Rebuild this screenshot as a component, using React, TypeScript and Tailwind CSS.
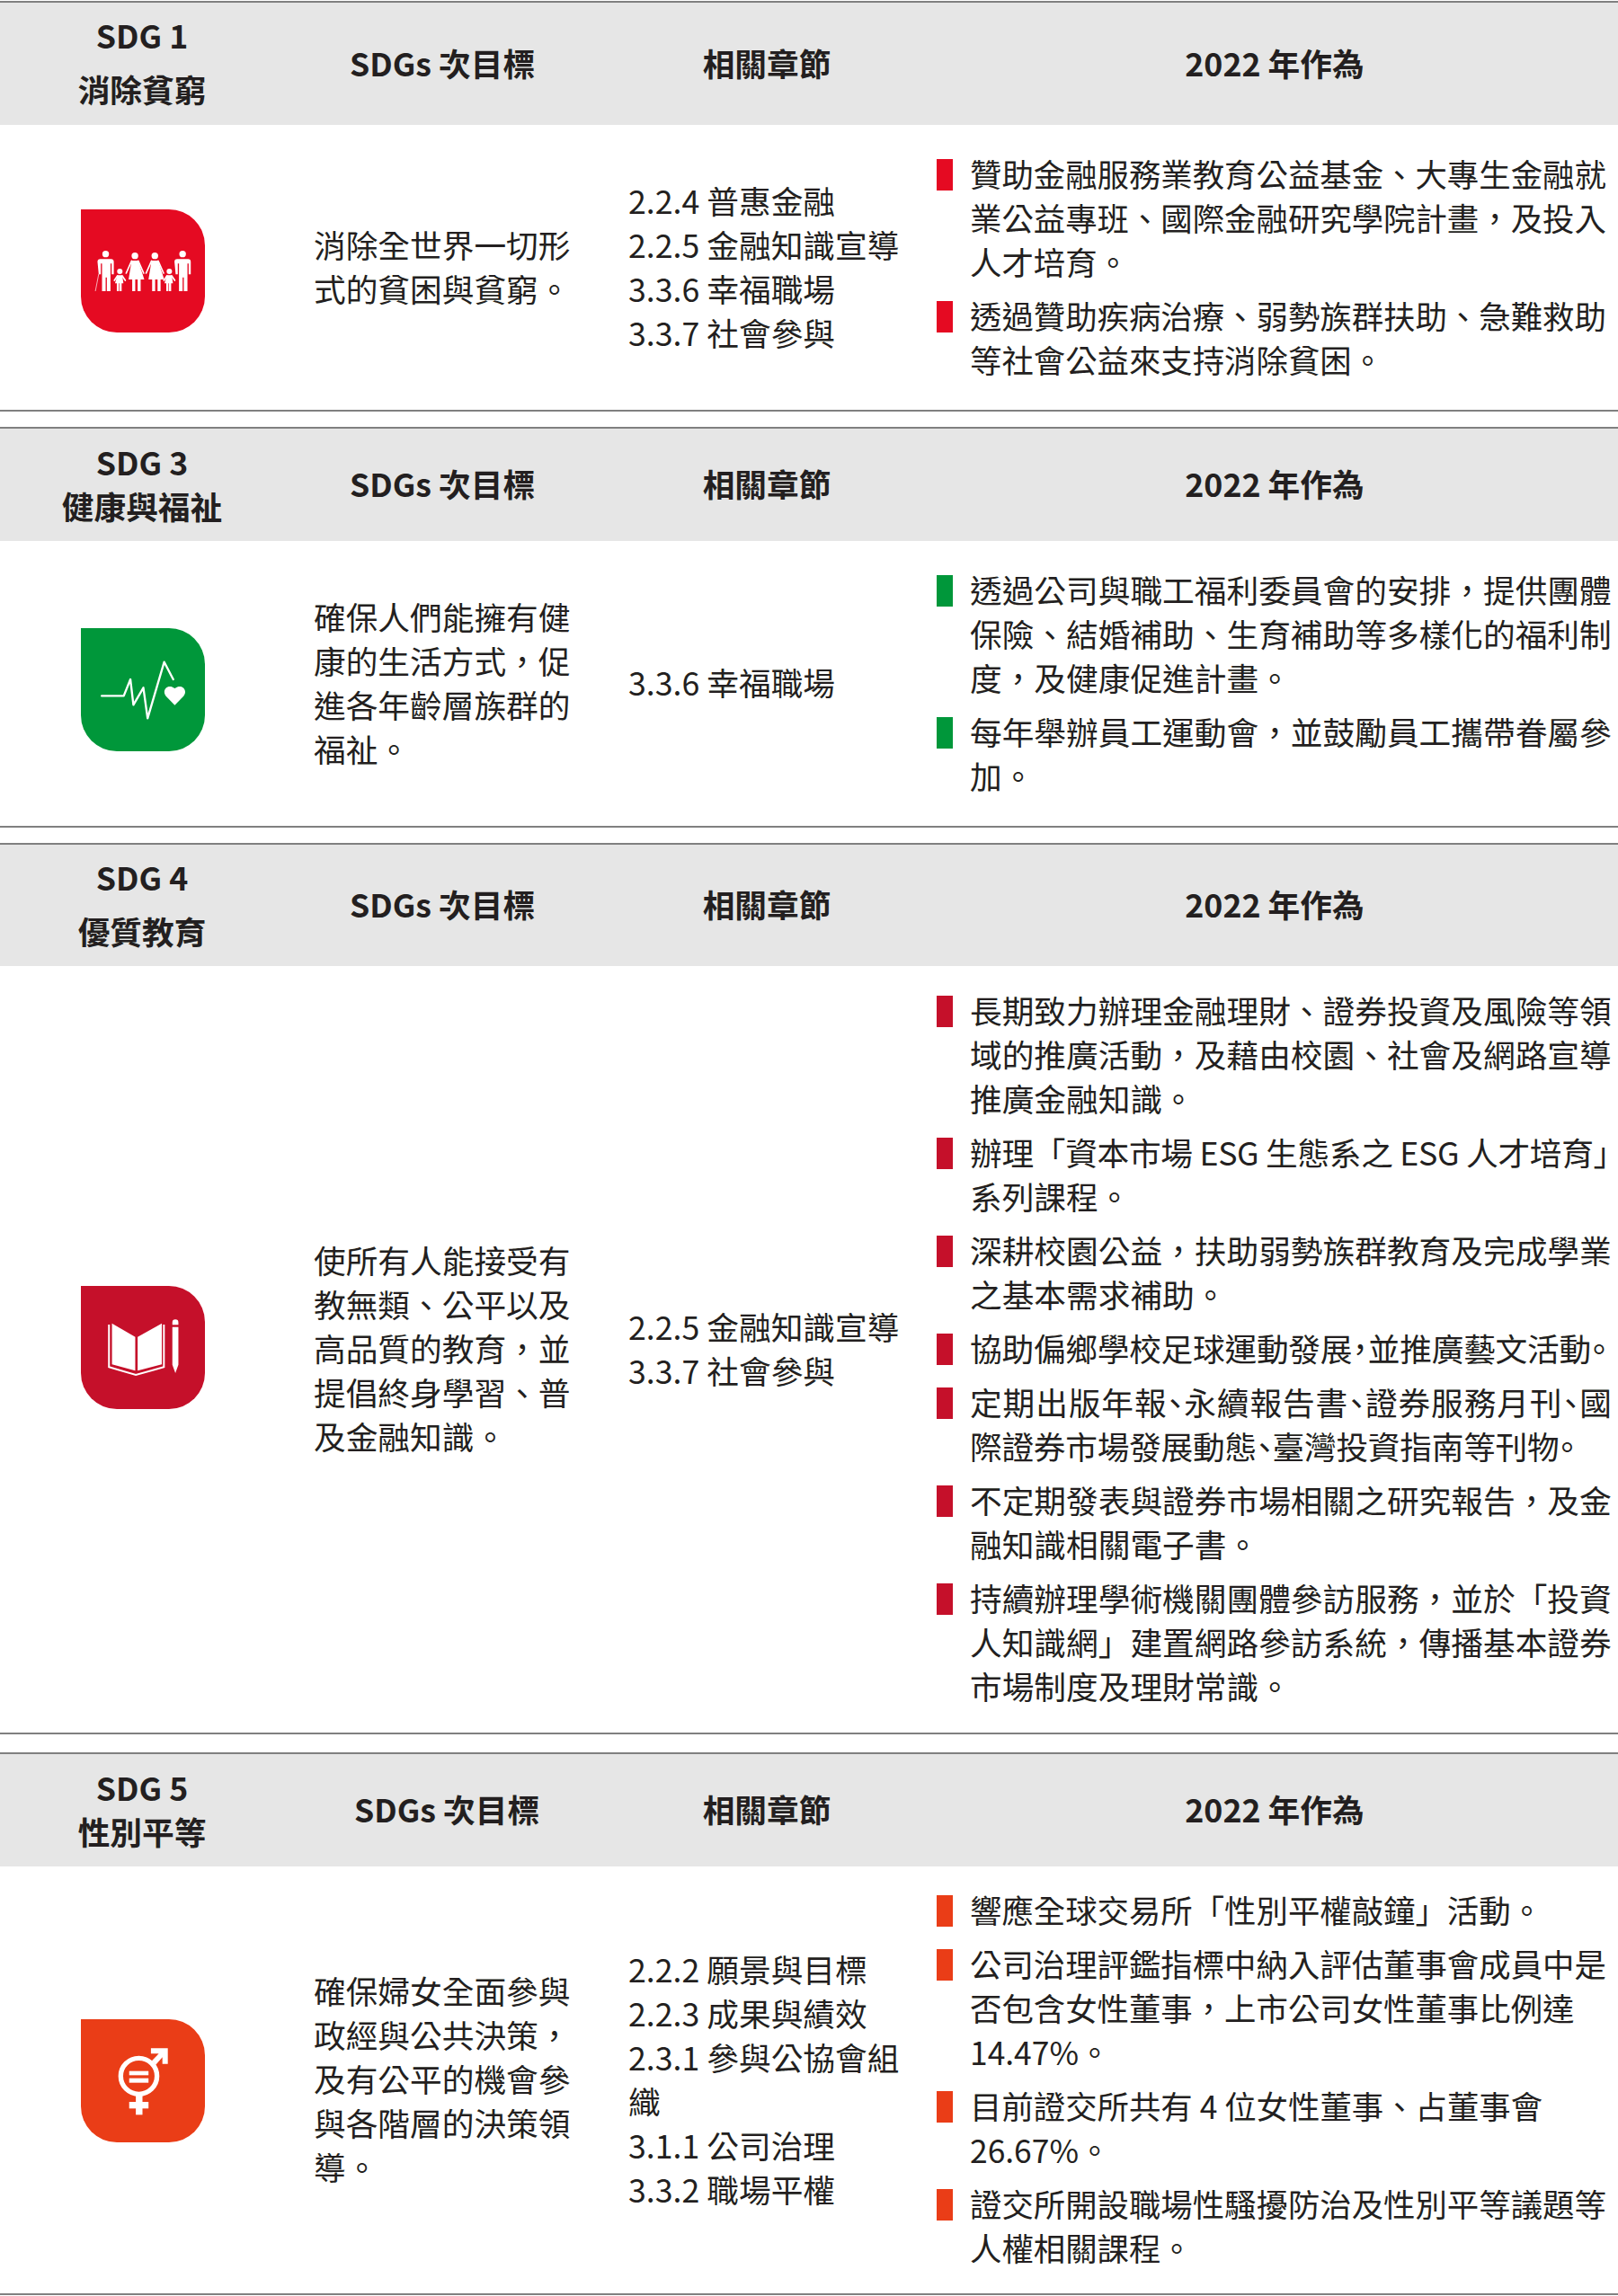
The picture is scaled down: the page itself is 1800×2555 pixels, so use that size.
import React from 'react';

interface Goal {
  sdg: string;
  name: string;
  headH: string;
  leading: string;
  bodyH: string;
  gap: string;
  icon: React.ReactNode;
  iconBg: string;
  iconShift: string;
  bullet: string;
  actionSize: string;
  subHeadShift?: string;
  target: string[];
  chapters: string[];
  actions: string[][];
}

// lines the reference fits to the column by hand: half-width punctuation and/or tracking
const FITTED: Record<string, string> = {
  '協助偏鄉學校足球運動發展\uFF0C並推廣藝文活動。': "[font-feature-settings:'halt'] tracking-[-0.25px]",
  '定期出版年報、永續報告書、證券服務月刊、國': "[font-feature-settings:'halt'] tracking-[0.9px]",
  '際證券市場發展動態、臺灣投資指南等刊物。': "[font-feature-settings:'halt'] tracking-[-0.25px]",
  '辦理「資本市場 ESG 生態系之 ESG 人才培育」': 'tracking-[-0.3px]',
};

function Man({ cx }: { cx: number }) {
  return (
    <g fill="#fff">
      <circle cx={cx} cy={218} r={11} />
      <path d={`M${cx - 27} 244q0-9 9-9h36q9 0 9 9v42h-7v-36h-4v92h-12v-46h-4v46h-12v-92h-4v36h-7z`} />
    </g>
  );
}

function Woman({ cx }: { cx: number }) {
  return (
    <g fill="#fff">
      <circle cx={cx} cy={224} r={11} />
      <path d={`M${cx - 11} 240h22l20 63h-12v39h-10v-39h-8v39h-10v-39h-12z`} />
      <path d={`M${cx - 11} 241L${cx - 29} 282M${cx + 11} 241L${cx + 29} 282`} stroke="#fff" strokeWidth={5} strokeLinecap="round" />
    </g>
  );
}

function Kid({ cx }: { cx: number }) {
  return (
    <g fill="#fff">
      <circle cx={cx} cy={276} r={9} />
      <path d={`M${cx - 8} 289h16l4 27h-6v26h-7v-26h-2v26h-7v-26h-6z`} />
      <path d={`M${cx - 8} 291L${cx - 18} 306M${cx + 8} 291L${cx + 18} 306`} stroke="#fff" strokeWidth={5} strokeLinecap="round" />
    </g>
  );
}

// icon art is traced in crop coordinates, so the group shifts it back into the box
function IconFamily() {
  return (
    <g transform="translate(-90 -69)">
      <Man cx={172} />
      <path d="M149 285L138 342" stroke="#fff" strokeWidth={2} />
      <Kid cx={219} />
      <Woman cx={269} />
      <Woman cx={335} />
      <Kid cx={383} />
      <Man cx={427} />
    </g>
  );
}

function IconHealth() {
  return (
    <g transform="translate(-90 -57)">
      <polyline points="159,283 232,283 254,228 264,313 297,256 311,358 366,170 396,228" fill="none" stroke="#fff" strokeWidth={7} strokeLinecap="round" strokeLinejoin="round" />
      <path d="M401 314L372 284C356 264 378 240 401 258C424 240 446 264 430 284Z" fill="#fff" />
    </g>
  );
}

function IconBook() {
  return (
    <g transform="translate(-90 -63)" fill="#fff">
      <polygon points="193,188 270,233 270,346 193,325" />
      <polygon points="278,233 358,188 358,325 278,346" />
      <path d="M183 192V334L272 360L365 334V192" fill="none" stroke="#fff" strokeWidth={6} />
      <path d="M393 185a10 10 0 0 1 20 0v8h-20zM393 200h20v126l-10 28l-10-28z" />
    </g>
  );
}

function IconGender() {
  return (
    <g transform="translate(-90 -51)" fill="#fff">
      <circle cx={282} cy={241} r={60} fill="none" stroke="#fff" strokeWidth={16} />
      <rect x={250} y={224} width={64} height={14} />
      <rect x={250} y={248} width={64} height={15} />
      <rect x={272} y={305} width={22} height={65} />
      <rect x={250} y={327} width={64} height={22} />
      <path d="M322 148H378V200H360V178L338 203L325 190L348 166H322Z" />
    </g>
  );
}

const goals: Goal[] = [
  {
    sdg: 'SDG 1',
    name: '消除貧窮',
    headH: 'h-[136px]',
    leading: 'leading-[60px]',
    bodyH: 'h-[317px]',
    gap: 'mb-[17px]',
    icon: <IconFamily />,
    iconBg: 'bg-[#e50a22]',
    iconShift: 'mt-[12px]',
    bullet: 'bg-[#e50a22]',
    actionSize: 'text-[35.4px]',
    target: ['消除全世界一切形', '式的貧困與貧窮。'],
    chapters: ['2.2.4 普惠金融', '2.2.5 金融知識宣導', '3.3.6 幸福職場', '3.3.7 社會參與'],
    actions: [
      ['贊助金融服務業教育公益基金、大專生金融就', '業公益專班、國際金融研究學院計畫\uFF0C及投入', '人才培育。'],
      ['透過贊助疾病治療、弱勢族群扶助、急難救助', '等社會公益來支持消除貧困。'],
    ],
  },
  {
    sdg: 'SDG 3',
    name: '健康與福祉',
    headH: 'h-[125px]',
    leading: 'leading-[49px]',
    bodyH: 'h-[317px]',
    gap: 'mb-[17px]',
    icon: <IconHealth />,
    iconBg: 'bg-[#00973a]',
    iconShift: 'mt-[17px]',
    bullet: 'bg-[#00973a]',
    actionSize: 'text-[35.7px]',
    target: ['確保人們能擁有健', '康的生活方式\uFF0C促', '進各年齡層族群的', '福祉。'],
    chapters: ['3.3.6 幸福職場'],
    actions: [
      ['透過公司與職工福利委員會的安排\uFF0C提供團體', '保險、結婚補助、生育補助等多樣化的福利制', '度\uFF0C及健康促進計畫。'],
      ['每年舉辦員工運動會\uFF0C並鼓勵員工攜帶眷屬參', '加。'],
    ],
  },
  {
    sdg: 'SDG 4',
    name: '優質教育',
    headH: 'h-[135px]',
    leading: 'leading-[60px]',
    bodyH: 'h-[853px]',
    gap: 'mb-[20px]',
    icon: <IconBook />,
    iconBg: 'bg-[#c5102a]',
    iconShift: '-mt-[1px]',
    bullet: 'bg-[#c5102a]',
    actionSize: 'text-[35.7px]',
    target: ['使所有人能接受有', '教無類、公平以及', '高品質的教育\uFF0C並', '提倡終身學習、普', '及金融知識。'],
    chapters: ['2.2.5 金融知識宣導', '3.3.7 社會參與'],
    actions: [
      ['長期致力辦理金融理財、證券投資及風險等領', '域的推廣活動\uFF0C及藉由校園、社會及網路宣導', '推廣金融知識。'],
      ['辦理「資本市場 ESG 生態系之 ESG 人才培育」', '系列課程。'],
      ['深耕校園公益\uFF0C扶助弱勢族群教育及完成學業', '之基本需求補助。'],
      ['協助偏鄉學校足球運動發展\uFF0C並推廣藝文活動。'],
      ['定期出版年報、永續報告書、證券服務月刊、國', '際證券市場發展動態、臺灣投資指南等刊物。'],
      ['不定期發表與證券市場相關之研究報告\uFF0C及金', '融知識相關電子書。'],
      ['持續辦理學術機關團體參訪服務\uFF0C並於「投資', '人知識網」建置網路參訪系統\uFF0C傳播基本證券', '市場制度及理財常識。'],
    ],
  },
  {
    sdg: 'SDG 5',
    name: '性別平等',
    headH: 'h-[125px]',
    leading: 'leading-[49px]',
    bodyH: 'h-[475px]',
    gap: '',
    icon: <IconGender />,
    iconBg: 'bg-[#ea3d17]',
    iconShift: 'mt-[5px]',
    bullet: 'bg-[#ea3d17]',
    actionSize: 'text-[35.4px]',
    subHeadShift: 'translate-x-[5px]',
    target: ['確保婦女全面參與', '政經與公共決策\uFF0C', '及有公平的機會參', '與各階層的決策領', '導。'],
    chapters: ['2.2.2 願景與目標', '2.2.3 成果與績效', '2.3.1 參與公協會組', '織', '3.1.1 公司治理', '3.3.2 職場平權'],
    actions: [
      ['響應全球交易所「性別平權敲鐘」活動。'],
      ['公司治理評鑑指標中納入評估董事會成員中是', '否包含女性董事\uFF0C上市公司女性董事比例達', '14.47%。'],
      ['目前證交所共有 4 位女性董事、占董事會', '26.67%。'],
      ['證交所開設職場性騷擾防治及性別平等議題等', '人權相關課程。'],
    ],
  },
];

function GoalTable({ goal }: { goal: Goal }) {
  return (
    <section className={`border-y-2 border-[#808080] ${goal.gap}`}>
      <div className={`flex items-center bg-[#e6e6e6] pb-[4px] text-center font-bold ${goal.headH}`}>
        <div className={`w-[316px] shrink-0 ${goal.leading}`}>
          <div>{goal.sdg}</div>
          <div>{goal.name}</div>
        </div>
        <div className={`w-[352px] shrink-0 ${goal.subHeadShift ?? ''}`}>SDGs 次目標</div>
        <div className="w-[370px] shrink-0">相關章節</div>
        <div className="flex-1 pr-[7px] pl-[5px]">2022 年作為</div>
      </div>
      <div className={`flex items-center pb-[4px] ${goal.bodyH}`}>
        <div className="flex w-[316px] shrink-0 justify-center">
          <svg viewBox="0 0 411 411" preserveAspectRatio="none" className={`ml-[2px] h-[137px] w-[138px] rounded-[40px] rounded-tl-none ${goal.iconBg} ${goal.iconShift}`}>
            {goal.icon}
          </svg>
        </div>
        <div className="w-[350px] shrink-0 pl-[33px]">
          {goal.target.map((line) => (
            <div key={line} className="whitespace-nowrap">{line}</div>
          ))}
        </div>
        <div className="w-[370px] shrink-0 pl-[33px]">
          {goal.chapters.map((line) => (
            <div key={line} className="whitespace-nowrap">{line}</div>
          ))}
        </div>
        <div className={`flex min-w-0 flex-1 flex-col gap-[11px] pl-[6px] ${goal.actionSize}`}>
          {goal.actions.map((lines) => (
            <div key={lines[0]} className="flex">
              <span className={`mt-[9px] h-[35px] w-[18px] shrink-0 ${goal.bullet}`} />
              <div className="ml-[19px]">
                {lines.map((line) => (
                  <div key={line} className={`whitespace-nowrap ${FITTED[line] ?? ''}`}>
                    {line}
                  </div>
                ))}
              </div>
            </div>
          ))}
        </div>
      </div>
    </section>
  );
}

export default function App() {
  return (
    <div className="h-[2555px] w-[1800px] bg-white pt-px font-['Noto_Sans_CJK_TC','Noto_Sans',sans-serif] text-[35.7px] leading-[49px] text-[#231f20]">
      {goals.map((goal) => (
        <GoalTable key={goal.sdg} goal={goal} />
      ))}
    </div>
  );
}
